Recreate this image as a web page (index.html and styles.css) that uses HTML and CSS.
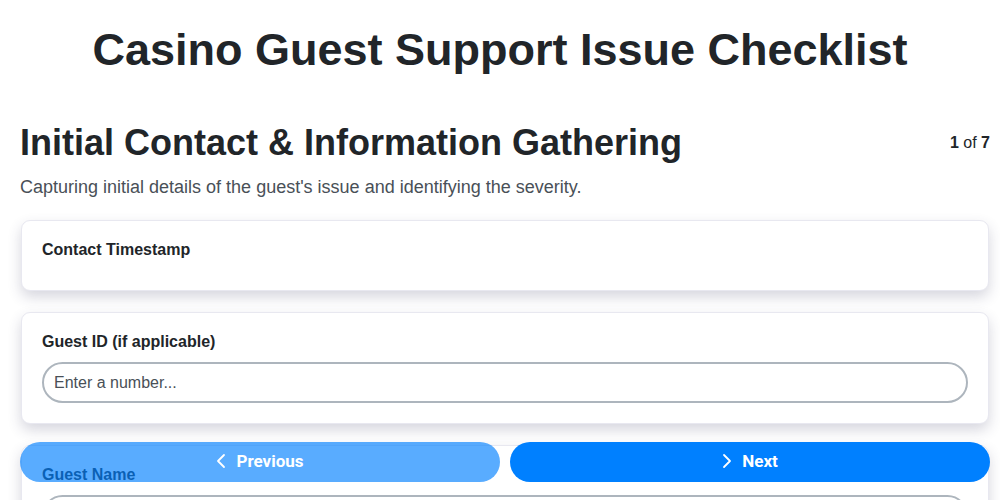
FILE: index.html
```html
<!DOCTYPE html>
<html lang="en">
<head>
<meta charset="utf-8">
<title>Casino Guest Support Issue Checklist</title>
<link rel="stylesheet" href="styles.css">
</head>
<body>
<h1 class="title">Casino Guest Support Issue Checklist</h1>
<div class="page">
  <div class="section-head">
    <h2 class="section-title">Initial Contact &amp; Information Gathering</h2>
    <div class="step-count"><b>1</b> of <b>7</b></div>
  </div>
  <p class="section-desc">Capturing initial details of the guest's issue and identifying the severity.</p>
  <div class="cards">
    <div class="card">
      <label class="card-label">Contact Timestamp</label>
      <div class="card-empty"></div>
    </div>
    <div class="card">
      <label class="card-label" for="gid">Guest ID (if applicable)</label>
      <input class="field" id="gid" type="text" placeholder="Enter a number...">
    </div>
    <div class="card">
      <label class="card-label" for="gname">Guest Name</label>
      <input class="field" id="gname" type="text" placeholder="Enter text...">
    </div>
  </div>
</div>
<div class="nav">
  <button class="nav-btn disabled" type="button">
    <svg class="chev" width="10" height="16" viewBox="0 0 10 16"><path d="M8 2 L2 8 L8 14" fill="none" stroke="#fff" stroke-width="1.8" stroke-linecap="round" stroke-linejoin="round"/></svg>
    <span>Previous</span>
  </button>
  <button class="nav-btn" type="button">
    <svg class="chev" width="10" height="16" viewBox="0 0 10 16"><path d="M2 2 L8 8 L2 14" fill="none" stroke="#fff" stroke-width="1.8" stroke-linecap="round" stroke-linejoin="round"/></svg>
    <span>Next</span>
  </button>
</div>
</body>
</html>
```
FILE: styles.css
```css
html {
  scrollbar-width: none;
}
html::-webkit-scrollbar {
  display: none;
}
html, body {
  margin: 0;
  padding: 0;
  background: #fff;
}
body {
  font-family: "Liberation Sans", Arial, sans-serif;
  color: #212529;
}
.title {
  margin: 0;
  padding-top: 24px;
  text-align: center;
  font-size: 45px;
  font-weight: 700;
  line-height: 52px;
  color: #212529;
}
.page {
  padding: 0 10px 0 20px;
}
.section-head {
  display: flex;
  justify-content: space-between;
  align-items: center;
  margin-top: 46px;
}
.section-title {
  margin: 0;
  font-size: 36px;
  font-weight: 700;
  line-height: 42px;
}
.step-count {
  font-size: 16px;
  color: #212529;
}
.section-desc {
  margin: 11px 0 0;
  font-size: 18px;
  line-height: 24px;
  color: #495057;
}
.cards {
  display: flex;
  flex-direction: column;
  gap: 21px;
  margin-top: 21px;
  padding: 0 1px;
}
.card {
  display: flex;
  flex-direction: column;
  background: #fff;
  border: 1px solid #e8e8f0;
  border-radius: 9px;
  padding: 20px 20px;
  box-shadow: 0 6px 14px rgba(50, 50, 90, 0.2);
}
.card-label {
  font-size: 16px;
  font-weight: 700;
  line-height: 18px;
  margin-bottom: 11px;
  color: #212529;
}
.card-empty {
  height: 0;
}
.field {
  box-sizing: border-box;
  height: 41px;
  border: 2px solid #adb5bd;
  border-radius: 21px;
  padding: 0 10px;
  font-family: "Liberation Sans", Arial, sans-serif;
  font-size: 16px;
  color: #495057;
  background: #fff;
  outline: none;
}
.field::placeholder {
  color: #495057;
}
.nav {
  position: fixed;
  left: 20px;
  right: 10px;
  bottom: 18px;
  display: flex;
  gap: 10px;
}
.nav-btn {
  flex: 1;
  height: 40px;
  display: flex;
  align-items: center;
  justify-content: center;
  gap: 10px;
  padding: 0 0 2px;
  border: none;
  border-radius: 20px;
  background: #0080ff;
  color: #fff;
  font-family: Roboto, "Liberation Sans", sans-serif;
  font-size: 17px;
  font-weight: 700;
}
.nav-btn.disabled {
  opacity: 0.65;
}
.chev {
  display: block;
}
```
